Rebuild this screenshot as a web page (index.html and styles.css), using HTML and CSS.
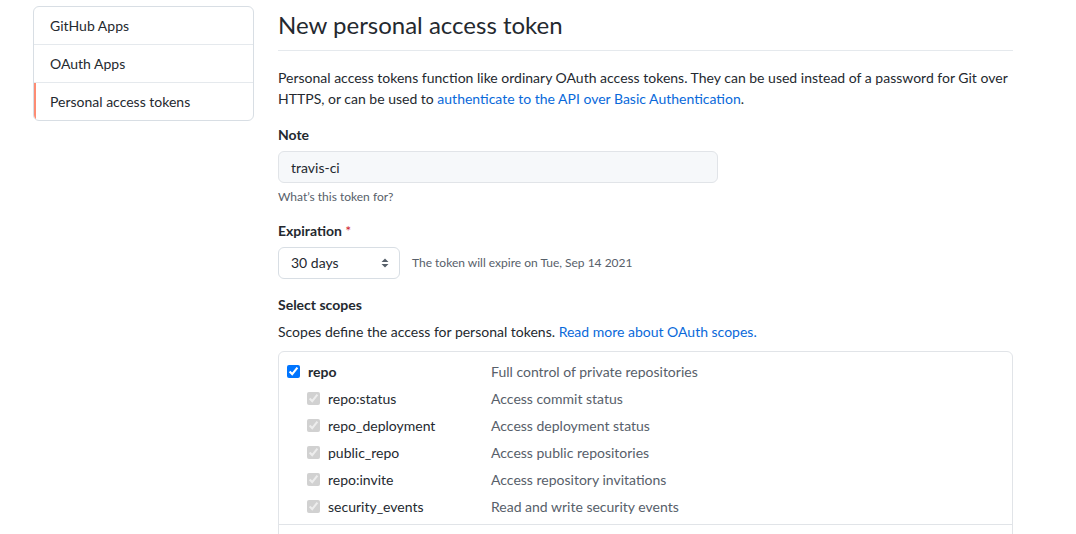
FILE: index.html
```html
<!DOCTYPE html>
<html lang="en">
<head>
<meta charset="utf-8">
<title>New personal access token</title>
<link rel="stylesheet" href="styles.css">
</head>
<body>
<div class="layout">
  <nav class="menu">
    <a class="menu-item" href="#">GitHub Apps</a>
    <a class="menu-item" href="#">OAuth Apps</a>
    <a class="menu-item selected" href="#">Personal access tokens</a>
  </nav>
  <main class="main">
    <div class="subhead">
      <h1 class="subhead-title">New personal access token</h1>
    </div>
    <p class="intro">Personal access tokens function like ordinary OAuth access tokens. They can be used instead of a password for Git over HTTPS, or can be used to <a href="#">authenticate to the API over Basic Authentication</a>.</p>

    <div class="form-group note-group">
      <label class="form-label">Note</label>
      <div class="input">travis-ci</div>
      <p class="note">What’s this token for?</p>
    </div>

    <div class="form-group">
      <label class="form-label">Expiration <span class="req">*</span></label>
      <div class="expire-row">
        <div class="select">
          <span>30 days</span>
          <svg class="select-arrow" width="8" height="12" viewBox="0 0 8 12"><path d="M4 1.5 L7.5 5 H0.5 Z M4 10.5 L0.5 7 H7.5 Z" fill="#57606a"/></svg>
        </div>
        <span class="expire-note">The token will expire on Tue, Sep 14 2021</span>
      </div>
    </div>

    <div class="form-group scopes-group">
      <label class="form-label">Select scopes</label>
      <p class="scopes-desc">Scopes define the access for personal tokens. <a href="#">Read more about OAuth scopes.</a></p>
      <div class="scopes">
        <div class="scope-group">
          <div class="scope-row parent">
            <label class="scope-name"><input type="checkbox" checked><span>repo</span></label>
            <span class="scope-desc">Full control of private repositories</span>
          </div>
          <div class="scope-row child">
            <label class="scope-name"><input type="checkbox" checked disabled><span>repo:status</span></label>
            <span class="scope-desc">Access commit status</span>
          </div>
          <div class="scope-row child">
            <label class="scope-name"><input type="checkbox" checked disabled><span>repo_deployment</span></label>
            <span class="scope-desc">Access deployment status</span>
          </div>
          <div class="scope-row child">
            <label class="scope-name"><input type="checkbox" checked disabled><span>public_repo</span></label>
            <span class="scope-desc">Access public repositories</span>
          </div>
          <div class="scope-row child">
            <label class="scope-name"><input type="checkbox" checked disabled><span>repo:invite</span></label>
            <span class="scope-desc">Access repository invitations</span>
          </div>
          <div class="scope-row child">
            <label class="scope-name"><input type="checkbox" checked disabled><span>security_events</span></label>
            <span class="scope-desc">Read and write security events</span>
          </div>
        </div>
        <div class="scope-group empty"></div>
      </div>
    </div>
  </main>
</div>
</body>
</html>
```
FILE: styles.css
```css
* { box-sizing: border-box; }
html, body { background: #ffffff; }
body {
  margin: 0;
  font-family: Lato, "Noto Sans", sans-serif;
  font-size: 14px;
  line-height: 21px;
  color: #24292f;
  overflow: hidden;
}
a { color: #0969da; text-decoration: none; }
p { margin: 0; }

.layout {
  display: flex;
  align-items: flex-start;
  gap: 24px;
  padding-left: 33px;
}

/* sidebar menu */
.menu {
  width: 221px;
  flex: none;
  margin-top: 6px;
  border: 1px solid #d8dee4;
  border-radius: 6px;
  overflow: hidden;
  display: flex;
  flex-direction: column;
}
.menu-item {
  display: block;
  position: relative;
  padding: 8px 16px;
  color: #24292f;
  border-bottom: 1px solid #e5e9ed;
}
.menu-item:last-child { border-bottom: 0; height: 37px; }
.menu-item.selected::before {
  content: "";
  position: absolute;
  left: 0;
  top: 0;
  bottom: 0;
  width: 2px;
  background: #fd8c73;
}

/* main */
.main {
  width: 735px;
  flex: none;
  padding-top: 10px;
}
.subhead {
  border-bottom: 1px solid #e5e9ed;
  padding-bottom: 10px;
  margin-bottom: 16px;
}
.subhead-title {
  margin: 0;
  font-size: 24px;
  line-height: 30px;
  font-weight: 400;
}
.intro { margin-bottom: 15px; }

.form-group { margin-bottom: 15px; }
.form-group.note-group { margin-bottom: 14px; }
.form-label {
  display: block;
  font-weight: 700;
  margin-bottom: 6px;
}
.req { color: #cf222e; font-weight: 400; }

.input {
  width: 440px;
  height: 32px;
  padding: 5px 12px;
  background: #f6f8fa;
  border: 1px solid #e1e4e8;
  border-radius: 6px;
}
.note {
  margin-top: 5px;
  font-size: 12px;
  line-height: 18px;
  color: #57606a;
}

.expire-row {
  display: flex;
  align-items: center;
  gap: 12px;
}
.select {
  width: 122px;
  height: 32px;
  padding: 4px 8px 6px 12px;
  border: 1px solid #d8dee4;
  border-radius: 6px;
  background: #ffffff;
  display: flex;
  align-items: center;
  justify-content: space-between;
}
.select-arrow { margin-right: 2px; margin-top: 2px; }
.expire-note {
  font-size: 12px;
  line-height: 18px;
  color: #57606a;
}

.scopes-desc { margin-bottom: 9px; }

.scopes {
  border: 1px solid #e1e4e8;
  border-radius: 6px;
  min-height: 300px;
}
.scope-group {
  padding: 6px 0 4px 8px;
  border-bottom: 1px solid #e1e4e8;
}
.scope-group.empty { border-bottom: 0; height: 60px; }
.scope-row {
  display: grid;
  grid-template-columns: 204px 1fr;
  height: 27px;
  align-items: center;
}
.scope-name {
  display: flex;
  align-items: center;
  gap: 8px;
}
.scope-row.child .scope-name { padding-left: 20px; }
.scope-row.parent .scope-name span { font-weight: 700; }
.scope-name input {
  margin: 0;
  width: 13px;
  height: 13px;
  flex: none;
}
.scope-desc { color: #57606a; }
```
